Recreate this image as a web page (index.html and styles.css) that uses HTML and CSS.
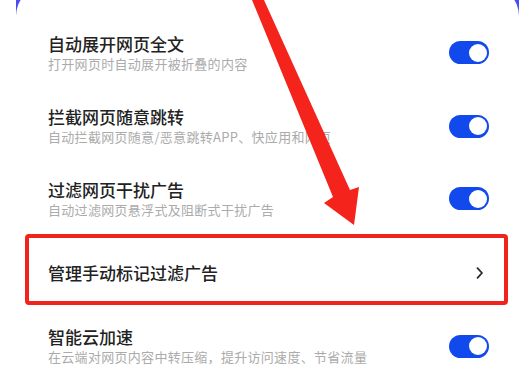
FILE: index.html
```html
<!DOCTYPE html>
<html lang="zh-CN">
<head>
<meta charset="utf-8">
<title>设置</title>
<link rel="stylesheet" href="styles.css">
</head>
<body>
<div class="page">
  <div class="frame">
    <div class="card">
      <div class="row r1">
        <div class="text">
          <div class="title">自动展开网页全文</div>
          <div class="sub">打开网页时自动展开被折叠的内容</div>
        </div>
        <span class="toggle"><span class="knob"></span></span>
      </div>
      <div class="row r2">
        <div class="text">
          <div class="title">拦截网页随意跳转</div>
          <div class="sub">自动拦截网页随意/恶意跳转APP、快应用和网页</div>
        </div>
        <span class="toggle"><span class="knob"></span></span>
      </div>
      <div class="row r3">
        <div class="text">
          <div class="title">过滤网页干扰广告</div>
          <div class="sub">自动过滤网页悬浮式及阻断式干扰广告</div>
        </div>
        <span class="toggle"><span class="knob"></span></span>
      </div>
      <div class="row boxed">
        <div class="title">管理手动标记过滤广告</div>
        <svg class="chev" width="8" height="12" viewBox="0 0 8 12"><polyline points="1.5,1.2 6,6 1.5,10.8" fill="none" stroke="#2a2a2a" stroke-width="1.8" stroke-linecap="round" stroke-linejoin="round"/></svg>
      </div>
      <div class="row r5">
        <div class="text">
          <div class="title">智能云加速</div>
          <div class="sub">在云端对网页内容中转压缩，提升访问速度、节省流量</div>
        </div>
        <span class="toggle"><span class="knob"></span></span>
      </div>
    </div>
  </div>
  <svg class="arrow" width="525" height="368" viewBox="0 0 525 368">
    <polygon points="252,0 264,0 350,190 359,187 354,225 324,203 333,197" fill="#f4231b"/>
  </svg>
</div>
</body>
</html>
```

FILE: styles.css
```css
html, body {
  margin: 0;
  padding: 0;
  background: #ffffff;
}
body {
  width: 525px;
  height: 368px;
  overflow: hidden;
  font-family: "Noto Sans CJK SC", "Noto Sans", sans-serif;
}
.page {
  position: relative;
  width: 525px;
  height: 368px;
  overflow: hidden;
}
.frame {
  margin: 0 6px 0 16px;
  background: #4b4cf2;
  height: 368px;
}
.card {
  background: #ffffff;
  border-radius: 30px 30px 0 0;
  margin-top: -14px;
  padding-top: 30px;
  height: 400px;
}
.row {
  display: flex;
  align-items: center;
  justify-content: space-between;
  padding: 0 30px 0 32px;
}
.r1 { height: 73px; }
.r2 { height: 74px; }
.r3 { height: 71px; }
.r5 { height: 82px; }
.text {
  display: flex;
  flex-direction: column;
}
.title {
  font-size: 17px;
  line-height: 22px;
  font-weight: 500;
  color: #222222;
}
.sub {
  font-size: 13px;
  line-height: 18px;
  letter-spacing: 0.3px;
  color: #ababab;
}
.toggle {
  display: flex;
  align-items: center;
  justify-content: flex-end;
  width: 40px;
  height: 23px;
  box-sizing: border-box;
  padding: 0 2px;
  border-radius: 12px;
  background: #1249ec;
}
.knob {
  width: 18px;
  height: 18px;
  border-radius: 50%;
  background: #ffffff;
}
.boxed {
  height: 71px;
  box-sizing: border-box;
  margin: 0 11px 0 9px;
  border: 4px solid #f0241c;
  border-radius: 4px;
  padding: 7px 20px 0 19px;
}
.chev {
  display: block;
}
.arrow {
  position: absolute;
  left: 0;
  top: 0;
}
```
